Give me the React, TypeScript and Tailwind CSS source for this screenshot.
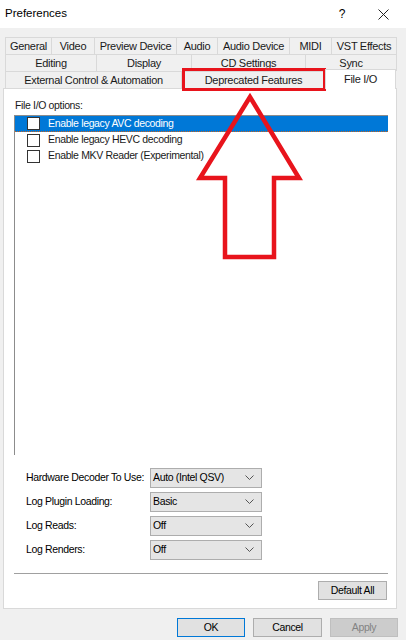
import React from 'react';

const font = { fontFamily: '"Liberation Sans", Arial, sans-serif' };

const row1 = [
  ['General', 'w-[47px]'],
  ['Video', 'w-[43px]'],
  ['Preview Device', 'w-[82px]'],
  ['Audio', 'w-[41px]'],
  ['Audio Device', 'w-[72px]'],
  ['MIDI', 'w-[42px]'],
  ['VST Effects', 'w-[65px]'],
];

const row2 = [
  ['Editing', 'w-[92px]'],
  ['Display', 'w-[95px]'],
  ['CD Settings', 'w-[114px]'],
  ['Sync', 'w-[91px]'],
];

const Tab = ({ label, w, first }: { label: string; w: string; first?: boolean }) => (
  <div
    className={`${w} h-full flex items-center justify-center whitespace-nowrap border-t border-r border-[#d9d9d9] bg-[#f0f0f0] ${first ? 'border-l' : ''}`}
  >
    {label}
  </div>
);

const Chevron = () => (
  <svg width="9" height="6" viewBox="0 0 9 6" className="shrink-0">
    <polyline points="0.5,0.5 4.5,4.5 8.5,0.5" fill="none" stroke="#555" strokeWidth="1" />
  </svg>
);

const Select = ({ value }: { value: string }) => (
  <div className="w-[112px] h-[20px] shrink-0 flex items-center justify-between pl-[2px] pr-[7px] bg-[#e5e5e5] border border-[#adadad]">
    <span>{value}</span>
    <Chevron />
  </div>
);

const Check = () => <div className="w-[13px] h-[13px] border border-[#333] bg-white shrink-0" />;

export default function App() {
  const options = [
    'Enable legacy AVC decoding',
    'Enable legacy HEVC decoding',
    'Enable MKV Reader (Experimental)',
  ];
  const settings = [
    ['Hardware Decoder To Use:', 'Auto (Intel QSV)'],
    ['Log Plugin Loading:', 'Basic'],
    ['Log Reads:', 'Off'],
    ['Log Renders:', 'Off'],
  ];

  return (
    <div
      className="relative w-[406px] h-[640px] bg-[#f0f0f0] text-[10.5px] tracking-[-0.35px] text-black overflow-hidden"
      style={font}
    >
      {/* title bar */}
      <div className="h-[28px] bg-white flex items-center pl-[5px] pr-[17px]">
        <span className="text-[11.5px] tracking-normal flex-1">Preferences</span>
        <span className="text-[12px] mr-[33px]">?</span>
        <svg width="11" height="11" viewBox="0 0 11 11">
          <path d="M0.5 0.5 L10.5 10.5 M10.5 0.5 L0.5 10.5" stroke="#222" strokeWidth="1" />
        </svg>
      </div>

      <div className="flex flex-col px-[3px] pt-[9px]">
        {/* tabs */}
        <div className="flex flex-col pl-[2px] text-[#1a1a1a] text-[11px] tracking-[-0.3px]">
          <div className="flex h-[17px]">
            {row1.map(([l, w], i) => (
              <Tab key={l} label={l} w={w} first={i === 0} />
            ))}
          </div>
          <div className="flex h-[17px]">
            {row2.map(([l, w], i) => (
              <Tab key={l} label={l} w={w} first={i === 0} />
            ))}
          </div>
          <div className="flex h-[17px] items-end">
            <Tab label="External Control & Automation" w="w-[177px]" first />
            <Tab label="Deprecated Features" w="w-[144px]" />
            <div className="relative z-10 w-[71px] h-[20px] -mb-px -ml-px bg-white border-t border-l border-r border-[#d9d9d9] flex justify-center pt-[1px]">
              File I/O
            </div>
          </div>
        </div>

        {/* panel */}
        <div className="w-[394px] bg-white border border-[#d9d9d9] pl-[10px] pr-[8px] pt-[9px] pb-[8px] flex flex-col">
          <div className="h-[15px] leading-[15px] pl-px text-[#1a1a1a]">File I/O options:</div>
          <div className="mt-[2px] h-[340px] border-l border-t border-[#8c8c8c] flex flex-col">
            {options.map((o, i) => (
              <div
                key={o}
                className={`h-[16px] flex items-center pl-[12px] gap-[8px] ${
                  i === 0 ? 'bg-[#0078d7] text-white border-b border-dotted border-[#c8641e]' : 'text-[#1a1a1a]'
                }`}
              >
                <Check />
                <span>{o}</span>
              </div>
            ))}
          </div>

          <div className="mt-[13px] flex flex-col gap-[4px] pl-[12px]">
            {settings.map(([l, v]) => (
              <div key={l} className="flex items-center">
                <span className="w-[124px] shrink-0 whitespace-nowrap">{l}</span>
                <Select value={v} />
              </div>
            ))}
          </div>

          <div className="mt-[13px] h-px bg-[#a0a0a0]" />
          <div className="mt-[7px] flex justify-end">
            <button className="w-[69px] h-[19px] bg-[#e1e1e1] border border-[#adadad] mr-[1px]">Default All</button>
          </div>
        </div>

        {/* dialog buttons */}
        <div className="mt-[9px] flex justify-end gap-[8px] pr-[5px]">
          <button className="w-[68px] h-[19px] bg-[#e1e1e1] border border-[#0078d7]">OK</button>
          <button className="w-[69px] h-[19px] bg-[#e1e1e1] border border-[#adadad]">Cancel</button>
          <button className="w-[68px] h-[19px] bg-[#cccccc] border border-[#bfbfbf] text-[#838383]">Apply</button>
        </div>
      </div>

      {/* red annotation */}
      <div className="absolute left-[182px] top-[68px] w-[144px] h-[23px] border-[3px] border-[#e8141c]" />
      <svg className="absolute left-0 top-0 pointer-events-none" width="406" height="640">
        <polygon
          points="250,97 200,178 225,178 225,257 274,257 274,178 299,178"
          fill="none"
          stroke="#e8141c"
          strokeWidth="4.5"
          strokeLinejoin="miter"
        />
      </svg>
    </div>
  );
}
